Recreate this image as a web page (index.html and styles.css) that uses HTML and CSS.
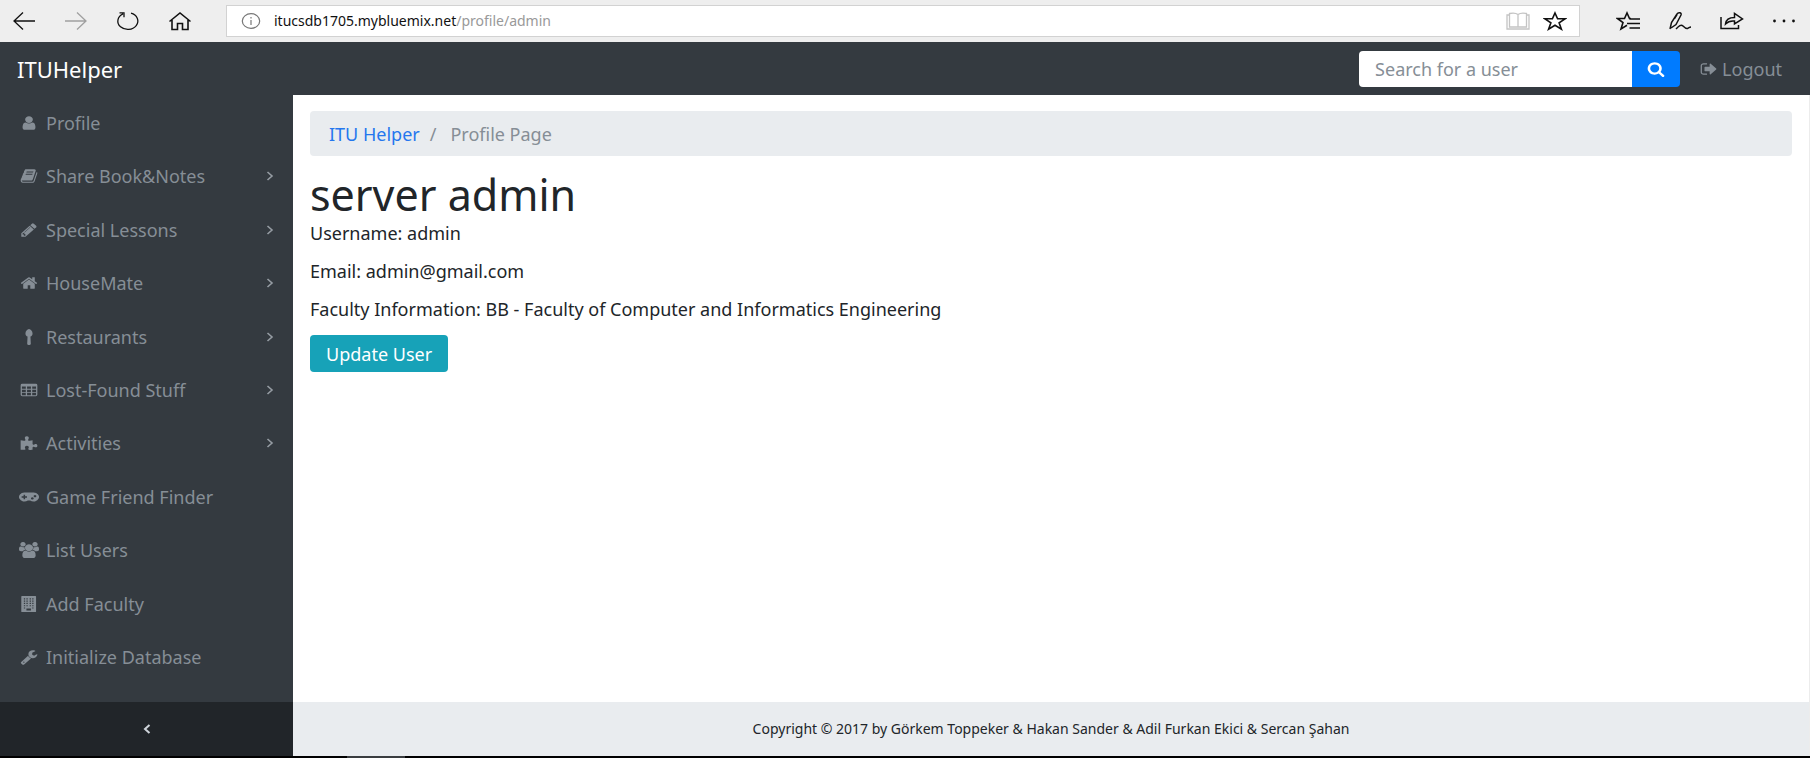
FILE: index.html
```html
<!DOCTYPE html>
<html lang="en">
<head>
<meta charset="utf-8">
<title>ITU Helper - Profile Page</title>
<link rel="stylesheet" href="styles.css">
</head>
<body>
<header class="browser">
  <div class="browser-nav">
    <button class="tool" aria-label="Back"><svg viewBox="0 0 24 20"><path d="M23 10H2M11 1.500L2 10l9 8.500"/></svg></button>
    <button class="tool tool-off" aria-label="Forward" disabled><svg viewBox="0 0 24 20"><path d="M1 10h21M13 1.500l9 8.500-9 8.500"/></svg></button>
    <button class="tool" aria-label="Refresh"><svg viewBox="0 0 24 20"><path d="M15 2.200A10 8.300 0 1 1 7 2.800M3.500 1.800h4.500v4.500"/></svg></button>
    <button class="tool" aria-label="Home"><svg class="bold" viewBox="0 0 24 20"><path d="M1.500 10.500L12 2l10.500 8.500M4 9v9.500h5.500v-6h5v6H20V9"/></svg></button>
  </div>
  <div class="address">
    <svg class="info" viewBox="0 0 20 18"><ellipse cx="10" cy="9" rx="8.700" ry="7.300"/><path d="M10 8v5M10 5v1.500"/></svg>
    <span class="url">itucsdb1705.mybluemix.net<span class="url-path">/profile/admin</span></span>
    <button class="tool tool-faint" aria-label="Reading view"><svg viewBox="0 0 24 20"><path d="M12 3.500C10 2 6 2 3.500 2.500v13.500h17V2.500C18 2 14 2 12 3.500v12M3.500 4H1v14h22V4h-2.500"/></svg></button>
    <button class="tool" aria-label="Add to favourites"><svg class="bold" viewBox="0 0 24 20"><path d="M12 2l2.600 5.800H22l-5.900 4 2.300 6.400L12 14.300l-6.400 3.900 2.300-6.400-5.900-4h7.400z"/></svg></button>
  </div>
  <div class="browser-actions">
    <button class="tool" aria-label="Favourites hub"><svg class="bold" viewBox="0 0 24 20"><path d="M15 7.500h-1.500L11 2 8.500 7.500H1.500l5.500 4-2 6.500 6-3.800M13.500 8H24M11 12.500h13M13.500 17H24"/></svg></button>
    <button class="tool" aria-label="Web note"><svg class="medium" viewBox="0 0 24 20"><path d="M2 18L3.500 11.500 9 3c1.200-2 5-1.500 4 1L8 13.500 3 17M6.500 7.500L9 3.500M8 18c3-3 5-5 7-3 1.500 1.500 3 3 4.500 2.500s2-1.500 3.500-1.500"/></svg></button>
    <button class="tool" aria-label="Share"><svg class="medium" viewBox="0 0 24 20"><path d="M1 6v11.500h17.500V14M5.500 13C6 8 10 6.500 14.500 6.500V2.500L22.500 8l-8 5v-3c-4-.500-6.500 .500-9 3z"/></svg></button>
    <button class="tool" aria-label="More"><svg class="solid" viewBox="0 0 24 20"><circle cx="2.500" cy="10" r="1.400"/><circle cx="12" cy="10" r="1.400"/><circle cx="21.500" cy="10" r="1.400"/></svg></button>
  </div>
</header>

<nav class="topbar">
  <a class="brand" href="#">ITUHelper</a>
  <form class="search">
    <input class="search-input" type="text" placeholder="Search for a user" aria-label="Search for a user">
    <button class="search-button" type="button" aria-label="Search"><svg class="icon" viewBox="0 0 1792 1792" preserveAspectRatio="none"><path d="M1216 832q0-185-131.500-316.500t-316.500-131.500-316.500 131.500-131.500 316.500 131.500 316.500 316.500 131.500 316.500-131.500 131.500-316.500zm512 832q0 52-38 90t-90 38q-54 0-90-38l-343-342q-179 124-399 124-143 0-273.500-55.500t-225-150-150-225-55.500-273.500 55.500-273.500 150-225 225-150 273.500-55.500 273.500 55.500 225 150 150 225 55.500 273.500q0 220-124 399l343 343q37 37 37 90z"/></svg></button>
  </form>
  <a class="logout" href="#"><svg class="icon" viewBox="0 0 1792 1792" preserveAspectRatio="none"><path d="M704 1440q0 4 1 20t.5 26.500-3 23.500-10 19.500-20.500 6.500h-320q-119 0-203.500-84.500t-84.500-203.500v-704q0-119 84.500-203.500t203.500-84.500h320q13 0 22.500 9.500t9.500 22.500q0 4 1 20t.5 26.500-3 23.500-10 19.500-20.500 6.500h-320q-66 0-113 47t-47 113v704q0 66 47 113t113 47h312l11.500 1 11.500 3 8 5.500 7 9 2 13.500zm928-544q0 26-19 45l-544 544q-19 19-45 19t-45-19-19-45v-288h-448q-26 0-45-19t-19-45v-384q0-26 19-45t45-19h448v-288q0-26 19-45t45-19 45 19l544 544q19 19 19 45z"/></svg>Logout</a>
</nav>

<div class="layout">
  <aside class="sidebar">
    <ul class="menu">
      <li><a class="menu-link" href="#"><svg class="icon" viewBox="0 0 1792 1792" preserveAspectRatio="none"><path d="M1536 1399q0 109-62.500 187t-150.500 78h-854q-88 0-150.500-78t-62.500-187q0-85 8.500-160.500t31.500-152 58.500-131 94-89 134.500-34.500q131 128 313 128t313-128q76 0 134.500 34.500t94 89 58.500 131 31.500 152 8.500 160.500zm-256-887q0 159-112.500 271.500t-271.500 112.500-271.500-112.500-112.500-271.500 112.500-271.500 271.500-112.500 271.500 112.500 112.500 271.500z"/></svg>Profile</a></li>
      <li><a class="menu-link has-sub" href="#"><svg class="icon" viewBox="0 0 1792 1792" preserveAspectRatio="none"><path d="M1703 478q40 57 18 129l-275 906q-19 64-76.500 107.500t-122.500 43.500h-923q-77 0-148.500-53.500t-99.500-131.500q-24-67-2-127 0-4 3-27t4-37q1-8-3-21.500t-3-19.500q2-11 8-21t16.500-23.500 16.500-23.500q23-38 45-91.500t30-91.500q3-10 .5-30t-.5-28q3-11 17-28t17-23q21-36 42-92t25-90q1-9-2.500-32t.5-28q4-13 22-30.500t22-22.500q19-26 42.500-84.500t27.500-96.500q1-8-3-25.500t-2-26.500q2-8 9-18t18-23 17-21q8-12 16.500-30.500t15-35 16-36 19.500-32 26.500-23.500 36-11.500 47.500 5.500l-1 3q38-9 51-9h761q74 0 114 56t18 130l-274 906q-36 119-71.500 153.500t-128.500 34.500h-869q-27 0-38 15-11 16-1 43 24 70 144 70h923q29 0 56-15.500t35-41.500l300-987q7-22 5-57 38 15 59 43zm-1064 2q-4 13 2 22.500t20 9.500h608q13 0 25.500-9.500t16.500-22.500l21-64q4-13-2-22.500t-20-9.500h-608q-13 0-25.500 9.500t-16.500 22.500zm-83 256q-4 13 2 22.500t20 9.500h608q13 0 25.500-9.500t16.500-22.500l21-64q4-13-2-22.500t-20-9.500h-608q-13 0-25.500 9.500t-16.500 22.500z"/></svg>Share Book&amp;Notes<svg class="chevron" viewBox="0 0 8 10"><path d="M1.500 1L6 5 1.500 9"/></svg></a></li>
      <li><a class="menu-link has-sub" href="#"><svg class="icon" viewBox="0 0 1792 1792" preserveAspectRatio="none"><path d="M491 1536l91-91-235-235-91 91v107h128v128h107zm523-928q0-22-22-22-10 0-17 7l-542 542q-7 7-7 17 0 22 22 22 10 0 17-7l542-542q7-7 7-17zm-54-192l416 416-832 832h-416v-416zm683 96q0 53-37 90l-166 166-416-416 166-165q36-38 90-38 53 0 91 38l235 234q37 39 37 91z"/></svg>Special Lessons<svg class="chevron" viewBox="0 0 8 10"><path d="M1.500 1L6 5 1.500 9"/></svg></a></li>
      <li><a class="menu-link has-sub" href="#"><svg class="icon" viewBox="0 0 1792 1792" preserveAspectRatio="none"><path d="M1472 992v480q0 26-19 45t-45 19h-384v-384h-256v384h-384q-26 0-45-19t-19-45v-480q0-1 .5-3t.5-3l575-474 575 474q1 2 1 6zm223-69l-62 74q-8 9-21 11h-3q-13 0-21-7l-692-577-692 577q-12 8-24 7-13-2-21-11l-62-74q-8-10-7-23.500t11-21.500l719-599q32-26 76-26t76 26l244 204v-195q0-14 9-23t23-9h192q14 0 23 9t9 23v408l219 182q10 8 11 21.500t-7 23.500z"/></svg>HouseMate<svg class="chevron" viewBox="0 0 8 10"><path d="M1.500 1L6 5 1.500 9"/></svg></a></li>
      <li><a class="menu-link has-sub" href="#"><svg class="icon" viewBox="0 0 1792 1792" preserveAspectRatio="none"><path d="M1250 500c0 190-95 300-210 344l36 820c2 70-50 128-120 128H836c-70 0-122-58-120-128l36-820C637 800 542 690 542 500 542 250 720 0 896 0s354 250 354 500z"/></svg>Restaurants<svg class="chevron" viewBox="0 0 8 10"><path d="M1.500 1L6 5 1.500 9"/></svg></a></li>
      <li><a class="menu-link has-sub" href="#"><svg class="icon" viewBox="0 0 1792 1792" preserveAspectRatio="none"><path fill-rule="evenodd" d="M224 192h1344q160 0 160 160v1088q0 160-160 160H224q-160 0-160-160V352q0-160 160-160zM192 512v256h384V512zM704 512v256h384V512zM1216 512v256h384V512zM192 864v256h384V864zM704 864v256h384V864zM1216 864v256h384V864zM192 1216v256h384v-256zM704 1216v256h384v-256zM1216 1216v256h384v-256z"/></svg>Lost-Found Stuff<svg class="chevron" viewBox="0 0 8 10"><path d="M1.500 1L6 5 1.500 9"/></svg></a></li>
      <li><a class="menu-link has-sub" href="#"><svg class="icon" viewBox="0 0 1792 1792" preserveAspectRatio="none"><path d="M64 600c140 20 300 50 420 30 110-30 60-100 20-170C430 300 510 150 680 150s240 150 170 300c-50 90-80 160 30 180 130 15 260-10 370-30v400c30 120 110 100 190 50 150-80 290 0 290 150s-140 230-290 150c-80-50-170-60-190 50v250c-130 30-260 20-370-10-100-40-60-110-20-180 60-140-20-260-170-260s-250 120-180 270c40 70 70 140-30 170-120 30-290 20-416 10z"/></svg>Activities<svg class="chevron" viewBox="0 0 8 10"><path d="M1.500 1L6 5 1.500 9"/></svg></a></li>
      <li><a class="menu-link" href="#"><svg class="icon wide" viewBox="0 0 1920 1792" preserveAspectRatio="none"><path fill-rule="evenodd" d="M512 384h896a512 512 0 1 1-340 896H852A512 512 0 1 1 512 384zM440 640v184H256v144h184v184h144V968h184V824H584V640zM1280 928a128 128 0 1 0 .1 0zM1536 672a128 128 0 1 0 .1 0z"/></svg>Game Friend Finder</a></li>
      <li><a class="menu-link" href="#"><svg class="icon wide" viewBox="0 0 1920 1792" preserveAspectRatio="none"><path d="M384 0a256 256 0 1 1-.1 0zM1536 0a256 256 0 1 1-.1 0zM960 256a384 384 0 1 1-.1 0zM150 512c60 0 120 80 234 80 70 0 110-20 150-32-10 140 20 250 90 336-120 0-200 50-260 128H190C70 1024 0 960 0 850c0-150 10-338 150-338zM1770 512c-60 0-120 80-234 80-70 0-110-20-150-32 10 140-20 250-90 336 120 0 200 50 260 128h174c120 0 190-64 190-174 0-150-10-338-150-338zM610 960c80 0 180 128 350 128s270-128 350-128c200 0 290 250 290 540 0 180-110 292-280 292H600c-170 0-280-112-280-292 0-290 90-540 290-540z"/></svg>List Users</a></li>
      <li><a class="menu-link" href="#"><svg class="icon" viewBox="0 0 1792 1792" preserveAspectRatio="none"><path fill-rule="evenodd" d="M192 0h1344q64 0 64 64v1664q0 64-64 64H192q-64 0-64-64V64q0-64 64-64zM384 256v128h128V256zM640 256v128h128V256zM960 256v128h128V256zM1216 256v128h128V256zM384 512v128h128V512zM640 512v128h128V512zM960 512v128h128V512zM1216 512v128h128V512zM384 768v128h128V768zM640 768v128h128V768zM960 768v128h128V768zM1216 768v128h128V768zM384 1024v128h128v-128zM640 1024v128h128v-128zM960 1024v128h128v-128zM1216 1024v128h128v-128zM384 1280v128h128v-128zM1216 1280v128h128v-128zM640 1408v224h448v-224z"/></svg>Add Faculty</a></li>
      <li><a class="menu-link" href="#"><svg class="icon" viewBox="0 0 1792 1792" preserveAspectRatio="none"><path d="M448 1472q0-26-19-45t-45-19-45 19-19 45 19 45 45 19 45-19 19-45zm644-420l-682 682q-37 37-90 37-52 0-91-37l-106-108q-38-36-38-90 0-53 38-91l681-681q39 98 114.500 173.500t173.500 114.500zm634-435q0 39-23 106-47 134-164.500 217.500t-258.500 83.500q-185 0-316.500-131.500t-131.500-316.500 131.500-316.500 316.500-131.500q58 0 121.500 16.500t107.500 46.500q16 11 16 28t-16 28l-293 169v224l193 107q5-3 79-48.500t135.500-81 70.500-35.500q15 0 23.500 10t8.500 25z"/></svg>Initialize Database</a></li>
    </ul>
    <button class="collapse" aria-label="Collapse menu"><svg class="chevron" viewBox="0 0 8 10"><path d="M6.500 1L2 5l4.500 4"/></svg></button>
  </aside>

  <div class="page">
    <main class="content">
      <ol class="breadcrumb">
        <li><a href="#">ITU Helper</a></li>
        <li class="current">Profile Page</li>
      </ol>
      <h1 class="name">server admin</h1>
      <p class="detail">Username: admin</p>
      <p class="detail">Email: admin@gmail.com</p>
      <p class="detail">Faculty Information: BB - Faculty of Computer and Informatics Engineering</p>
      <button class="update">Update User</button>
    </main>
    <footer class="footer">Copyright © 2017 by Görkem Toppeker &amp; Hakan Sander &amp; Adil Furkan Ekici &amp; Sercan Şahan</footer>
  </div>
</div>
<div class="taskbar"><span class="taskbar-item"></span></div>
</body>
</html>
```
FILE: styles.css
```css
* { box-sizing: border-box; }

body {
  margin: 0;
  min-height: 100vh;
  display: flex;
  flex-direction: column;
  background: #fff;
  color: #212529;
  font: 18px/24px "Noto Sans", "Open Sans", sans-serif;
}

button, input { font: inherit; margin: 0; }
a { text-decoration: none; }
button { cursor: pointer; }

/* Browser toolbar */
.browser {
  display: flex;
  align-items: center;
  height: 42px;
  padding: 0 14px 0 12px;
  background: #eee;
}
.browser-nav { display: flex; gap: 28px; margin-right: 34px; }
.browser-actions { display: flex; gap: 28px; margin-left: 36px; }
.tool {
  display: flex;
  padding: 0;
  border: 0;
  background: none;
  color: #111;
}
.tool svg {
  width: 24px;
  height: 20px;
  fill: none;
  stroke: currentColor;
  stroke-width: 1.3;
}
.tool .medium { stroke-width: 1.5; }
.tool .bold { stroke-width: 1.6; }
.tool .solid { fill: currentColor; stroke: none; }
.tool-off { color: #a0a0a0; }
.tool-faint { color: #c4c4c4; }
.address {
  flex: 1;
  display: flex;
  align-items: center;
  gap: 13px;
  height: 32px;
  padding: 0 12px 0 14px;
  border: 1px solid #d2d2d2;
  background: #fff;
}
.info { width: 20px; height: 18px; fill: none; stroke: #777; stroke-width: 1.2; }
.url { flex: 1; font-size: 14px; color: #111; }
.url-path { color: #999; }

/* Application header */
.topbar {
  display: flex;
  align-items: center;
  height: 53px;
  padding: 0 28px 0 17px;
  background: #343a40;
}
.brand { margin-right: auto; color: #fff; font-size: 22px; }
.search { display: flex; height: 36px; margin-right: 20px; }
.search-input {
  width: 273px;
  padding: 0 16px;
  border: 0;
  border-radius: 4px 0 0 4px;
  background: #fff;
}
.search-input::placeholder { color: #868e96; opacity: 1; }
.search-button {
  display: flex;
  align-items: center;
  justify-content: center;
  width: 48px;
  padding: 0;
  border: 0;
  border-radius: 0 4px 4px 0;
  background: #007bff;
  color: #fff;
}
.logout { display: flex; align-items: center; gap: 4px; color: #868e96; }
.icon { flex: none; width: 18px; height: 16px; fill: currentColor; }

/* Sidebar and page */
.layout { flex: 1; display: flex; }
.sidebar {
  display: flex;
  flex-direction: column;
  width: 293px;
  background: #343a40;
}
.menu {
  flex: 1;
  display: grid;
  grid-auto-rows: 1fr;
  margin: 0;
  padding: 1px 0 18px;
  list-style: none;
}
.menu-link {
  display: flex;
  align-items: center;
  gap: 8px;
  height: 100%;
  min-height: 40px;
  padding: 0 19px 0 20px;
  color: #868e96;
}
.menu-link .wide { width: 20px; margin: 0 -1px; }
.chevron {
  width: 8px;
  height: 10px;
  margin-left: auto;
  fill: none;
  stroke: #959ca3;
  stroke-width: 1.6;
}
.collapse {
  display: flex;
  align-items: center;
  justify-content: center;
  height: 54px;
  border: 0;
  background: #212529;
}
.collapse .chevron { margin: 0; stroke: #ced4da; stroke-width: 2; }

.page { flex: 1; display: flex; flex-direction: column; border-right: 1px solid #ececec; }
.content { flex: 1; padding: 16px 17px; }
.breadcrumb {
  display: flex;
  margin: 0 0 16px;
  padding: 11px 19px 10px;
  border-radius: 4px;
  background: #e9ecef;
  list-style: none;
}
.breadcrumb a { color: #2577ee; }
.current { color: #868e96; }
.current::before { content: "/"; padding: 0 14px 0 10px; }
.name { margin: 0 0 3px; font-size: 43px; font-weight: 400; line-height: 46px; }
.detail { margin: 0 0 14px; }
.update {
  height: 37px;
  padding: 0 16px;
  border: 0;
  border-radius: 4px;
  background: #17a2b8;
  color: #fff;
}
.footer {
  display: flex;
  align-items: center;
  justify-content: center;
  height: 54px;
  background: #e9ecef;
  font-size: 14px;
}

.taskbar { height: 2px; padding-left: 347px; background: #000; }
.taskbar-item { display: block; width: 58px; height: 2px; background: #3a3d40; }
```
